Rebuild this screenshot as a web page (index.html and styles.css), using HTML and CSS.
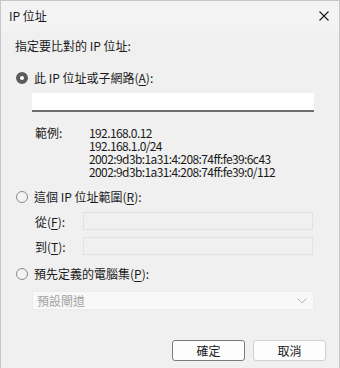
FILE: index.html
```html
<!DOCTYPE html>
<html lang="zh-Hant">
<head>
  <meta charset="UTF-8" />
  <meta name="viewport" content="width=device-width, initial-scale=1.0" />
  <title>IP 位址</title>
  <link rel="stylesheet" href="styles.css">
</head>
<body>
  <div class="window">
    <div class="titlebar">
      <span class="title">IP 位址</span>
      <svg class="close" width="10" height="10" viewBox="0 0 10 10">
        <path d="M0.5 0.5 L9.5 9.5 M9.5 0.5 L0.5 9.5" stroke="#1a1a1a" stroke-width="1.1" fill="none"/>
      </svg>
    </div>

    <div class="content">
      <div class="prompt">指定要比對的 IP 位址:</div>

      <label class="option first">
        <span class="radio checked"></span>
        此 IP 位址或子網路(<u>A</u>):
      </label>
      <div class="text-input"></div>

      <div class="examples">
        <div class="ex-label">範例:</div>
        <div class="ex-values">
          <div>192.168.0.12</div>
          <div>192.168.1.0/24</div>
          <div>2002:9d3b:1a31:4:208:74ff:fe39:6c43</div>
          <div>2002:9d3b:1a31:4:208:74ff:fe39:0/112</div>
        </div>
      </div>

      <label class="option">
        <span class="radio"></span>
        這個 IP 位址範圍(<u>R</u>):
      </label>
      <div class="range-row">
        <span class="range-label">從(<u>F</u>):</span>
        <div class="range-input"></div>
      </div>
      <div class="range-row">
        <span class="range-label">到(<u>T</u>):</span>
        <div class="range-input"></div>
      </div>

      <label class="option">
        <span class="radio"></span>
        預先定義的電腦集(<u>P</u>):
      </label>
      <div class="dropdown">
        <span>預設閘道</span>
        <svg width="10" height="6" viewBox="0 0 10 6">
          <path d="M0.5 0.5 L5 5 L9.5 0.5" stroke="#b8b8b8" stroke-width="1" fill="none"/>
        </svg>
      </div>
    </div>

    <div class="footer">
      <button class="btn default">確定</button>
      <button class="btn">取消</button>
    </div>
  </div>
</body>
</html>
```

FILE: styles.css
```css
* { box-sizing: border-box; }
body { margin: 0; font-family: "Noto Sans CJK TC", "Noto Sans", sans-serif; font-size: 12px; color: #1a1a1a; background: #f0f0f0; }
.window { width: 340px; height: 368px; display: flex; flex-direction: column; background: #f0f0f0; border: 1px solid #c6c6c6; border-bottom: none; }
.titlebar { height: 30px; background: #f3f3f3; display: flex; align-items: center; justify-content: space-between; padding: 0 10px 0 8px; flex-shrink: 0; }
.title { line-height: 16px; }
.content { padding: 0 0 0 14px; }
.prompt { margin-top: 7px; height: 16px; line-height: 16px; }
.option { display: flex; align-items: center; height: 16px; line-height: 16px; margin-top: 11px; }
.option.first { margin-top: 16px; }
.radio { width: 12px; height: 12px; border-radius: 50%; border: 1px solid #8a8a8a; background: #f3f3f3; margin: 0 6px 0 1px; flex-shrink: 0; }
.radio.checked { background: #fff; border: 4px solid #5c5c5c; }
u { text-decoration-thickness: 1px; text-underline-offset: 2px; }
.text-input { margin: 7px 0 0 17px; width: 282px; height: 19px; background: #fff; border-bottom: 2px solid #6e6e6e; }
.examples { display: flex; margin-top: 14px; line-height: 13px; }
.ex-label { width: 74px; padding-left: 20px; }
.ex-values { letter-spacing: -0.6px; }
.ex-values div { height: 13px; }
.range-row { display: flex; align-items: center; margin-top: 7px; height: 18px; }
.range-label { width: 68px; padding-left: 20px; }
.range-input { width: 230px; height: 18px; border: 1px solid #e2e2e2; background: #f0f0f0; }
.dropdown { margin: 9px 0 0 17px; width: 282px; height: 19px; background: #f8f8f8; border: 1px solid #ececec; display: flex; align-items: center; justify-content: space-between; padding: 0 6px 0 4px; color: #a3a3a3; }
.footer { margin-top: auto; display: flex; justify-content: flex-end; gap: 8px; padding: 0 13px 7px 0; }
.btn { width: 73px; height: 21px; font-family: inherit; font-size: 12px; color: #1a1a1a; background: #fdfdfd; border: 1px solid #d0d0d0; border-radius: 3px; padding: 0; }
.btn.default { border-color: #7a7a7a; }
```
